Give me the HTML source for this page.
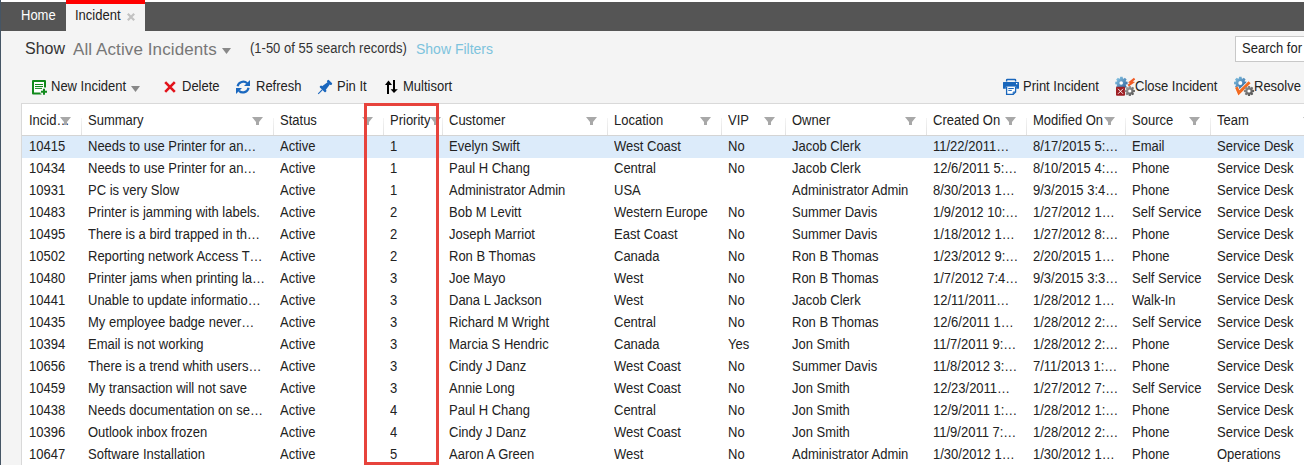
<!DOCTYPE html><html><head><meta charset="utf-8"><style>
*{margin:0;padding:0;box-sizing:border-box}
html,body{width:1304px;height:465px;overflow:hidden;background:#f4f4f4;font-family:"Liberation Sans",sans-serif;color:#222}
.a{position:absolute;white-space:nowrap}
#lstrip{position:absolute;left:0;top:0;width:1px;height:465px;background:#455565}
#topw{position:absolute;left:1px;top:0;width:1303px;height:2px;background:#fff}
#bar{position:absolute;left:1px;top:2px;width:1303px;height:29px;background:#555}
#tab{position:absolute;left:66px;top:0;width:79px;height:31px;background:#f4f4f4;border-top:4px solid #f00}
.s{font-size:14px;transform:scaleX(0.9286);transform-origin:0 0}
.t{line-height:22px;height:22px;overflow:hidden}
.h{line-height:16px}
#tbl{position:absolute;left:21px;top:103px;width:1300px;height:370px;background:#fff;border:1px solid #d9d9d9}
#hb{position:absolute;left:22px;top:135px;width:1290px;height:1px;background:#d4d4d4}
.sep{position:absolute;top:118px;width:1px;height:17px;background:linear-gradient(#f4f4f4,#e2e2e2)}
.rowhl{position:absolute;left:22px;top:136px;width:1290px;height:22px;background:#dcebfa}
#red{position:absolute;left:364px;top:103px;width:75px;height:362px;border:3px solid #e7433c}
</style></head><body>
<div id="lstrip"></div><div id="topw"></div><div id="bar"></div><div id="tab"></div>
<div class="a s" style="left:21px;top:7px;line-height:16px;color:#fff">Home</div>
<div class="a s" style="left:75px;top:7px;line-height:16px;color:#222">Incident</div>
<div class="a" style="left:25px;top:40px;font-size:16px;line-height:18px;color:#333">Show</div>
<div class="a" style="left:73px;top:41px;font-size:17px;line-height:18px;letter-spacing:0.1px;color:#777">All Active Incidents</div>
<svg class="a" style="left:222px;top:48px" width="9" height="6"><path d="M0 0H9L4.5 6Z" fill="#888"/></svg>
<div class="a s" style="left:250px;top:40px;line-height:16px;color:#333">(1-50 of 55 search records)</div>
<div class="a" style="left:416px;top:41px;font-size:14px;line-height:16px;color:#7dc3dd">Show Filters</div>
<div class="a" style="left:1235px;top:36px;width:80px;height:26px;background:#fff;border:1px solid #c8c8c8"></div>
<div class="a s" style="left:1242px;top:40px;line-height:16px;color:#222">Search for</div>
<div class="a s" style="left:51px;top:78px;line-height:16px;color:#222">New Incident</div>
<div class="a s" style="left:182px;top:78px;line-height:16px;color:#222">Delete</div>
<div class="a s" style="left:256px;top:78px;line-height:16px;color:#222">Refresh</div>
<div class="a s" style="left:337px;top:78px;line-height:16px;color:#222">Pin It</div>
<div class="a s" style="left:403px;top:78px;line-height:16px;color:#222">Multisort</div>
<div class="a s" style="left:1023px;top:78px;line-height:16px;color:#222">Print Incident</div>
<div class="a s" style="left:1135px;top:78px;line-height:16px;color:#222">Close Incident</div>
<div class="a s" style="left:1254px;top:78px;line-height:16px;color:#222">Resolve</div>
<svg class="a" style="left:131px;top:86px" width="9" height="6"><path d="M0 0H9L4.5 6Z" fill="#888"/></svg>
<div id="tbl"></div><div id="hb"></div>
<div class="sep" style="left:81px"></div>
<div class="sep" style="left:273px"></div>
<div class="sep" style="left:383px"></div>
<div class="sep" style="left:442px"></div>
<div class="sep" style="left:607px"></div>
<div class="sep" style="left:721px"></div>
<div class="sep" style="left:785px"></div>
<div class="sep" style="left:926px"></div>
<div class="sep" style="left:1026px"></div>
<div class="sep" style="left:1125px"></div>
<div class="sep" style="left:1210px"></div>
<div class="a h s" style="left:29px;top:112px">Incid…</div>
<div class="a h s" style="left:88px;top:112px">Summary</div>
<div class="a h s" style="left:280px;top:112px">Status</div>
<div class="a h s" style="left:390px;top:112px">Priority</div>
<div class="a h s" style="left:449px;top:112px">Customer</div>
<div class="a h s" style="left:614px;top:112px">Location</div>
<div class="a h s" style="left:728px;top:112px">VIP</div>
<div class="a h s" style="left:792px;top:112px">Owner</div>
<div class="a h s" style="left:933px;top:112px">Created On</div>
<div class="a h s" style="left:1033px;top:112px">Modified On</div>
<div class="a h s" style="left:1132px;top:112px">Source</div>
<div class="a h s" style="left:1217px;top:112px">Team</div>
<svg class="a" style="left:60px;top:117px" width="11" height="8"><path d="M0 0H11L7 5V8H4V5Z" fill="#a8a8a8"/></svg>
<svg class="a" style="left:252px;top:117px" width="11" height="8"><path d="M0 0H11L7 5V8H4V5Z" fill="#a8a8a8"/></svg>
<svg class="a" style="left:362px;top:117px" width="11" height="8"><path d="M0 0H11L7 5V8H4V5Z" fill="#a8a8a8"/></svg>
<svg class="a" style="left:430px;top:117px" width="11" height="8"><path d="M0 0H11L7 5V8H4V5Z" fill="#a8a8a8"/></svg>
<svg class="a" style="left:586px;top:117px" width="11" height="8"><path d="M0 0H11L7 5V8H4V5Z" fill="#a8a8a8"/></svg>
<svg class="a" style="left:700px;top:117px" width="11" height="8"><path d="M0 0H11L7 5V8H4V5Z" fill="#a8a8a8"/></svg>
<svg class="a" style="left:764px;top:117px" width="11" height="8"><path d="M0 0H11L7 5V8H4V5Z" fill="#a8a8a8"/></svg>
<svg class="a" style="left:905px;top:117px" width="11" height="8"><path d="M0 0H11L7 5V8H4V5Z" fill="#a8a8a8"/></svg>
<svg class="a" style="left:1005px;top:117px" width="11" height="8"><path d="M0 0H11L7 5V8H4V5Z" fill="#a8a8a8"/></svg>
<svg class="a" style="left:1104px;top:117px" width="11" height="8"><path d="M0 0H11L7 5V8H4V5Z" fill="#a8a8a8"/></svg>
<svg class="a" style="left:1189px;top:117px" width="11" height="8"><path d="M0 0H11L7 5V8H4V5Z" fill="#a8a8a8"/></svg>
<svg class="a" style="left:1303px;top:117px" width="11" height="8"><path d="M0 0H11L7 5V8H4V5Z" fill="#a8a8a8"/></svg>
<div class="rowhl"></div>
<div class="a t s" style="left:29px;top:135px;width:54px">10415</div>
<div class="a t s" style="left:88px;top:135px;width:198px">Needs to use Printer for an…</div>
<div class="a t s" style="left:280px;top:135px;width:109px">Active</div>
<div class="a t s" style="left:390px;top:135px;width:54px">1</div>
<div class="a t s" style="left:449px;top:135px;width:169px">Evelyn Swift</div>
<div class="a t s" style="left:614px;top:135px;width:114px">West Coast</div>
<div class="a t s" style="left:728px;top:135px;width:60px">No</div>
<div class="a t s" style="left:792px;top:135px;width:143px">Jacob Clerk</div>
<div class="a t s" style="left:933px;top:135px;width:99px">11/22/2011…</div>
<div class="a t s" style="left:1033px;top:135px;width:97px">8/17/2015 5:…</div>
<div class="a t s" style="left:1132px;top:135px;width:82px">Email</div>
<div class="a t s" style="left:1217px;top:135px;width:195px">Service Desk</div>
<div class="a t s" style="left:29px;top:157px;width:54px">10434</div>
<div class="a t s" style="left:88px;top:157px;width:198px">Needs to use Printer for an…</div>
<div class="a t s" style="left:280px;top:157px;width:109px">Active</div>
<div class="a t s" style="left:390px;top:157px;width:54px">1</div>
<div class="a t s" style="left:449px;top:157px;width:169px">Paul H Chang</div>
<div class="a t s" style="left:614px;top:157px;width:114px">Central</div>
<div class="a t s" style="left:728px;top:157px;width:60px">No</div>
<div class="a t s" style="left:792px;top:157px;width:143px">Jacob Clerk</div>
<div class="a t s" style="left:933px;top:157px;width:99px">12/6/2011 5:…</div>
<div class="a t s" style="left:1033px;top:157px;width:97px">8/10/2015 4:…</div>
<div class="a t s" style="left:1132px;top:157px;width:82px">Phone</div>
<div class="a t s" style="left:1217px;top:157px;width:195px">Service Desk</div>
<div class="a t s" style="left:29px;top:179px;width:54px">10931</div>
<div class="a t s" style="left:88px;top:179px;width:198px">PC is very Slow</div>
<div class="a t s" style="left:280px;top:179px;width:109px">Active</div>
<div class="a t s" style="left:390px;top:179px;width:54px">1</div>
<div class="a t s" style="left:449px;top:179px;width:169px">Administrator Admin</div>
<div class="a t s" style="left:614px;top:179px;width:114px">USA</div>
<div class="a t s" style="left:792px;top:179px;width:143px">Administrator Admin</div>
<div class="a t s" style="left:933px;top:179px;width:99px">8/30/2013 1…</div>
<div class="a t s" style="left:1033px;top:179px;width:97px">9/3/2015 3:4…</div>
<div class="a t s" style="left:1132px;top:179px;width:82px">Phone</div>
<div class="a t s" style="left:1217px;top:179px;width:195px">Service Desk</div>
<div class="a t s" style="left:29px;top:201px;width:54px">10483</div>
<div class="a t s" style="left:88px;top:201px;width:198px">Printer is jamming with labels.</div>
<div class="a t s" style="left:280px;top:201px;width:109px">Active</div>
<div class="a t s" style="left:390px;top:201px;width:54px">2</div>
<div class="a t s" style="left:449px;top:201px;width:169px">Bob M Levitt</div>
<div class="a t s" style="left:614px;top:201px;width:114px">Western Europe</div>
<div class="a t s" style="left:728px;top:201px;width:60px">No</div>
<div class="a t s" style="left:792px;top:201px;width:143px">Summer Davis</div>
<div class="a t s" style="left:933px;top:201px;width:99px">1/9/2012 10:…</div>
<div class="a t s" style="left:1033px;top:201px;width:97px">1/27/2012 1…</div>
<div class="a t s" style="left:1132px;top:201px;width:82px">Self Service</div>
<div class="a t s" style="left:1217px;top:201px;width:195px">Service Desk</div>
<div class="a t s" style="left:29px;top:223px;width:54px">10495</div>
<div class="a t s" style="left:88px;top:223px;width:198px">There is a bird trapped in th…</div>
<div class="a t s" style="left:280px;top:223px;width:109px">Active</div>
<div class="a t s" style="left:390px;top:223px;width:54px">2</div>
<div class="a t s" style="left:449px;top:223px;width:169px">Joseph Marriot</div>
<div class="a t s" style="left:614px;top:223px;width:114px">East Coast</div>
<div class="a t s" style="left:728px;top:223px;width:60px">No</div>
<div class="a t s" style="left:792px;top:223px;width:143px">Summer Davis</div>
<div class="a t s" style="left:933px;top:223px;width:99px">1/18/2012 1…</div>
<div class="a t s" style="left:1033px;top:223px;width:97px">1/27/2012 8:…</div>
<div class="a t s" style="left:1132px;top:223px;width:82px">Phone</div>
<div class="a t s" style="left:1217px;top:223px;width:195px">Service Desk</div>
<div class="a t s" style="left:29px;top:245px;width:54px">10502</div>
<div class="a t s" style="left:88px;top:245px;width:198px">Reporting network Access T…</div>
<div class="a t s" style="left:280px;top:245px;width:109px">Active</div>
<div class="a t s" style="left:390px;top:245px;width:54px">2</div>
<div class="a t s" style="left:449px;top:245px;width:169px">Ron B Thomas</div>
<div class="a t s" style="left:614px;top:245px;width:114px">Canada</div>
<div class="a t s" style="left:728px;top:245px;width:60px">No</div>
<div class="a t s" style="left:792px;top:245px;width:143px">Ron B Thomas</div>
<div class="a t s" style="left:933px;top:245px;width:99px">1/23/2012 9:…</div>
<div class="a t s" style="left:1033px;top:245px;width:97px">2/20/2015 1…</div>
<div class="a t s" style="left:1132px;top:245px;width:82px">Phone</div>
<div class="a t s" style="left:1217px;top:245px;width:195px">Service Desk</div>
<div class="a t s" style="left:29px;top:267px;width:54px">10480</div>
<div class="a t s" style="left:88px;top:267px;width:198px">Printer jams when printing la…</div>
<div class="a t s" style="left:280px;top:267px;width:109px">Active</div>
<div class="a t s" style="left:390px;top:267px;width:54px">3</div>
<div class="a t s" style="left:449px;top:267px;width:169px">Joe Mayo</div>
<div class="a t s" style="left:614px;top:267px;width:114px">West</div>
<div class="a t s" style="left:728px;top:267px;width:60px">No</div>
<div class="a t s" style="left:792px;top:267px;width:143px">Ron B Thomas</div>
<div class="a t s" style="left:933px;top:267px;width:99px">1/7/2012 7:4…</div>
<div class="a t s" style="left:1033px;top:267px;width:97px">9/3/2015 3:3…</div>
<div class="a t s" style="left:1132px;top:267px;width:82px">Self Service</div>
<div class="a t s" style="left:1217px;top:267px;width:195px">Service Desk</div>
<div class="a t s" style="left:29px;top:289px;width:54px">10441</div>
<div class="a t s" style="left:88px;top:289px;width:198px">Unable to update informatio…</div>
<div class="a t s" style="left:280px;top:289px;width:109px">Active</div>
<div class="a t s" style="left:390px;top:289px;width:54px">3</div>
<div class="a t s" style="left:449px;top:289px;width:169px">Dana L Jackson</div>
<div class="a t s" style="left:614px;top:289px;width:114px">West</div>
<div class="a t s" style="left:728px;top:289px;width:60px">No</div>
<div class="a t s" style="left:792px;top:289px;width:143px">Jacob Clerk</div>
<div class="a t s" style="left:933px;top:289px;width:99px">12/11/2011…</div>
<div class="a t s" style="left:1033px;top:289px;width:97px">1/28/2012 1…</div>
<div class="a t s" style="left:1132px;top:289px;width:82px">Walk-In</div>
<div class="a t s" style="left:1217px;top:289px;width:195px">Service Desk</div>
<div class="a t s" style="left:29px;top:311px;width:54px">10435</div>
<div class="a t s" style="left:88px;top:311px;width:198px">My employee badge never…</div>
<div class="a t s" style="left:280px;top:311px;width:109px">Active</div>
<div class="a t s" style="left:390px;top:311px;width:54px">3</div>
<div class="a t s" style="left:449px;top:311px;width:169px">Richard M Wright</div>
<div class="a t s" style="left:614px;top:311px;width:114px">Central</div>
<div class="a t s" style="left:728px;top:311px;width:60px">No</div>
<div class="a t s" style="left:792px;top:311px;width:143px">Ron B Thomas</div>
<div class="a t s" style="left:933px;top:311px;width:99px">12/6/2011 1…</div>
<div class="a t s" style="left:1033px;top:311px;width:97px">1/28/2012 2:…</div>
<div class="a t s" style="left:1132px;top:311px;width:82px">Self Service</div>
<div class="a t s" style="left:1217px;top:311px;width:195px">Service Desk</div>
<div class="a t s" style="left:29px;top:333px;width:54px">10394</div>
<div class="a t s" style="left:88px;top:333px;width:198px">Email is not working</div>
<div class="a t s" style="left:280px;top:333px;width:109px">Active</div>
<div class="a t s" style="left:390px;top:333px;width:54px">3</div>
<div class="a t s" style="left:449px;top:333px;width:169px">Marcia S Hendric</div>
<div class="a t s" style="left:614px;top:333px;width:114px">Canada</div>
<div class="a t s" style="left:728px;top:333px;width:60px">Yes</div>
<div class="a t s" style="left:792px;top:333px;width:143px">Jon Smith</div>
<div class="a t s" style="left:933px;top:333px;width:99px">11/7/2011 9:…</div>
<div class="a t s" style="left:1033px;top:333px;width:97px">1/28/2012 2:…</div>
<div class="a t s" style="left:1132px;top:333px;width:82px">Phone</div>
<div class="a t s" style="left:1217px;top:333px;width:195px">Service Desk</div>
<div class="a t s" style="left:29px;top:355px;width:54px">10656</div>
<div class="a t s" style="left:88px;top:355px;width:198px">There is a trend whith users…</div>
<div class="a t s" style="left:280px;top:355px;width:109px">Active</div>
<div class="a t s" style="left:390px;top:355px;width:54px">3</div>
<div class="a t s" style="left:449px;top:355px;width:169px">Cindy J Danz</div>
<div class="a t s" style="left:614px;top:355px;width:114px">West Coast</div>
<div class="a t s" style="left:728px;top:355px;width:60px">No</div>
<div class="a t s" style="left:792px;top:355px;width:143px">Summer Davis</div>
<div class="a t s" style="left:933px;top:355px;width:99px">11/8/2012 3:…</div>
<div class="a t s" style="left:1033px;top:355px;width:97px">7/11/2013 1:…</div>
<div class="a t s" style="left:1132px;top:355px;width:82px">Phone</div>
<div class="a t s" style="left:1217px;top:355px;width:195px">Service Desk</div>
<div class="a t s" style="left:29px;top:377px;width:54px">10459</div>
<div class="a t s" style="left:88px;top:377px;width:198px">My transaction will not save</div>
<div class="a t s" style="left:280px;top:377px;width:109px">Active</div>
<div class="a t s" style="left:390px;top:377px;width:54px">3</div>
<div class="a t s" style="left:449px;top:377px;width:169px">Annie Long</div>
<div class="a t s" style="left:614px;top:377px;width:114px">West Coast</div>
<div class="a t s" style="left:728px;top:377px;width:60px">No</div>
<div class="a t s" style="left:792px;top:377px;width:143px">Jon Smith</div>
<div class="a t s" style="left:933px;top:377px;width:99px">12/23/2011…</div>
<div class="a t s" style="left:1033px;top:377px;width:97px">1/27/2012 7:…</div>
<div class="a t s" style="left:1132px;top:377px;width:82px">Self Service</div>
<div class="a t s" style="left:1217px;top:377px;width:195px">Service Desk</div>
<div class="a t s" style="left:29px;top:399px;width:54px">10438</div>
<div class="a t s" style="left:88px;top:399px;width:198px">Needs documentation on se…</div>
<div class="a t s" style="left:280px;top:399px;width:109px">Active</div>
<div class="a t s" style="left:390px;top:399px;width:54px">4</div>
<div class="a t s" style="left:449px;top:399px;width:169px">Paul H Chang</div>
<div class="a t s" style="left:614px;top:399px;width:114px">Central</div>
<div class="a t s" style="left:728px;top:399px;width:60px">No</div>
<div class="a t s" style="left:792px;top:399px;width:143px">Jon Smith</div>
<div class="a t s" style="left:933px;top:399px;width:99px">12/9/2011 1:…</div>
<div class="a t s" style="left:1033px;top:399px;width:97px">1/28/2012 1:…</div>
<div class="a t s" style="left:1132px;top:399px;width:82px">Phone</div>
<div class="a t s" style="left:1217px;top:399px;width:195px">Service Desk</div>
<div class="a t s" style="left:29px;top:421px;width:54px">10396</div>
<div class="a t s" style="left:88px;top:421px;width:198px">Outlook inbox frozen</div>
<div class="a t s" style="left:280px;top:421px;width:109px">Active</div>
<div class="a t s" style="left:390px;top:421px;width:54px">4</div>
<div class="a t s" style="left:449px;top:421px;width:169px">Cindy J Danz</div>
<div class="a t s" style="left:614px;top:421px;width:114px">West Coast</div>
<div class="a t s" style="left:728px;top:421px;width:60px">No</div>
<div class="a t s" style="left:792px;top:421px;width:143px">Jon Smith</div>
<div class="a t s" style="left:933px;top:421px;width:99px">11/9/2011 7:…</div>
<div class="a t s" style="left:1033px;top:421px;width:97px">1/28/2012 2:…</div>
<div class="a t s" style="left:1132px;top:421px;width:82px">Phone</div>
<div class="a t s" style="left:1217px;top:421px;width:195px">Service Desk</div>
<div class="a t s" style="left:29px;top:443px;width:54px">10647</div>
<div class="a t s" style="left:88px;top:443px;width:198px">Software Installation</div>
<div class="a t s" style="left:280px;top:443px;width:109px">Active</div>
<div class="a t s" style="left:390px;top:443px;width:54px">5</div>
<div class="a t s" style="left:449px;top:443px;width:169px">Aaron A Green</div>
<div class="a t s" style="left:614px;top:443px;width:114px">West</div>
<div class="a t s" style="left:728px;top:443px;width:60px">No</div>
<div class="a t s" style="left:792px;top:443px;width:143px">Administrator Admin</div>
<div class="a t s" style="left:933px;top:443px;width:99px">1/30/2012 1…</div>
<div class="a t s" style="left:1033px;top:443px;width:97px">1/30/2012 1…</div>
<div class="a t s" style="left:1132px;top:443px;width:82px">Phone</div>
<div class="a t s" style="left:1217px;top:443px;width:195px">Operations</div>
<svg class="a" style="left:31px;top:79px" width="18" height="18" viewBox="0 0 18 18"><rect x="2" y="2" width="12" height="12.6" fill="#fff"/><path d="M14 8.5V2H2V14.6H10.5" fill="none" stroke="#118a1c" stroke-width="2" stroke-linejoin="round"/><path d="M4 5.5H12M4 7.5H12M4 9.4H11" stroke="#118a1c" stroke-width="1"/><path d="M13 9.3V16.3M9.5 12.8H16.5" stroke="#f4f4f4" stroke-width="4"/><path d="M13 9.8V15.8M10 12.8H16" stroke="#118a1c" stroke-width="2"/></svg>
<svg class="a" style="left:162px;top:79px" width="16" height="16" viewBox="0 0 16 16"><path d="M3.2 3.2L12.8 12.8M12.8 3.2L3.2 12.8" stroke="#e2131b" stroke-width="2.6" stroke-linecap="butt"/></svg>
<svg class="a" style="left:236px;top:80px" width="15" height="15" viewBox="0 0 15 15"><path d="M1.6 6.2A5.8 5.8 0 0 1 11.2 3.3" fill="none" stroke="#1a68bf" stroke-width="2.2"/><path d="M14 0V6H8Z" fill="#1a68bf"/><path d="M12.6 7.8A5.8 5.8 0 0 1 3 10.9" fill="none" stroke="#1a68bf" stroke-width="2.2"/><path d="M0 8H6L0 14Z" fill="#1a68bf"/></svg>
<svg class="a" style="left:316px;top:79px" width="17" height="17" viewBox="-8.5 -8.5 17 17"><g transform="rotate(45)" fill="#1a66bd"><rect x="-3" y="-8.4" width="6" height="2.5" rx="1"/><path d="M-1.5 -6.2H1.5L2.7 1.2H-2.7Z"/><rect x="-4" y="0.8" width="8" height="2.4" rx="0.8"/><rect x="-0.55" y="3" width="1.1" height="5.9"/></g></svg>
<svg class="a" style="left:381px;top:77px" width="20" height="20" viewBox="0 0 20 20"><path d="M7 7.2V17" stroke="#000" stroke-width="2"/><path d="M4 8L7.5 3.6L11 8Z" fill="#000"/><path d="M13 3V13" stroke="#000" stroke-width="2"/><path d="M9.6 12.3L13 16L16.8 12.3Z" fill="#000"/></svg>
<svg class="a" style="left:1000px;top:76px" width="22" height="22" viewBox="0 0 22 22"><path d="M6.6 5.4V4.2Q6.6 3.5 7.3 3.5H14.9Q15.6 3.5 15.6 4.2V5.4" fill="none" stroke="#1966bb" stroke-width="1.4"/><path d="M3.5 6H18.5Q19 6 19 6.5V12.2Q19 12.8 18.4 12.8H16.2V10.8H5.8V12.8H3.6Q3 12.8 3 12.2V6.5Q3 6 3.5 6Z" fill="#1966bb"/><rect x="16" y="7" width="1.3" height="1.3" fill="#fff"/><path d="M6.6 10.8V18.4H13.2L15.6 16V10.8" fill="#fff" stroke="#1966bb" stroke-width="1.3"/><path d="M8.3 12.5H13.8M8.3 14.4H11.8" stroke="#1966bb" stroke-width="1"/><path d="M13.2 18.4V16H15.6" fill="none" stroke="#1966bb" stroke-width="1"/></svg>
<svg class="a" style="left:1113px;top:75px" width="24" height="24" viewBox="0 0 24 24"><defs><linearGradient id="gb" x1="0" y1="0" x2="1" y2="1"><stop offset="0" stop-color="#8fd0ec"/><stop offset="1" stop-color="#2a5a96"/></linearGradient><linearGradient id="gg" x1="0" y1="0" x2="1" y2="1"><stop offset="0" stop-color="#b0b0b0"/><stop offset="1" stop-color="#4a4a4a"/></linearGradient></defs><path d="M12.85 6.48 L14.58 6.77 L14.58 9.23 L12.85 9.52 L12.62 10.07 L13.64 11.50 L11.90 13.24 L10.47 12.22 L9.92 12.45 L9.63 14.18 L7.17 14.18 L6.88 12.45 L6.33 12.22 L4.90 13.24 L3.16 11.50 L4.18 10.07 L3.95 9.52 L2.22 9.23 L2.22 6.77 L3.95 6.48 L4.18 5.93 L3.16 4.50 L4.90 2.76 L6.33 3.78 L6.88 3.55 L7.17 1.82 L9.63 1.82 L9.92 3.55 L10.47 3.78 L11.90 2.76 L13.64 4.50 L12.62 5.93Z" fill="url(#gb)"/><circle cx="8.2" cy="8" r="1.8" fill="#fff"/><path d="M21.6 3.6L17.4 6.9L19.6 7.4L15.2 10.6" fill="none" stroke="#f15a24" stroke-width="2.1" stroke-linejoin="miter"/><rect x="3" y="11.8" width="9" height="9" rx="1" fill="#9e1f24"/><path d="M5 13.8L10 18.8M10 13.8L5 18.8" stroke="#fff" stroke-width="0.9"/><path d="M20.40 14.77 L21.90 14.99 L21.90 17.01 L20.40 17.23 L20.21 17.67 L21.12 18.89 L19.69 20.32 L18.47 19.41 L18.03 19.60 L17.81 21.10 L15.79 21.10 L15.57 19.60 L15.13 19.41 L13.91 20.32 L12.48 18.89 L13.39 17.67 L13.20 17.23 L11.70 17.01 L11.70 14.99 L13.20 14.77 L13.39 14.33 L12.48 13.11 L13.91 11.68 L15.13 12.59 L15.57 12.40 L15.79 10.90 L17.81 10.90 L18.03 12.40 L18.47 12.59 L19.69 11.68 L21.12 13.11 L20.21 14.33Z" fill="url(#gg)"/><circle cx="16.8" cy="16" r="1.6" fill="#fff"/></svg>
<svg class="a" style="left:1231px;top:75px" width="24" height="24" viewBox="0 0 24 24"><defs><linearGradient id="gb2" x1="0" y1="0" x2="1" y2="1"><stop offset="0" stop-color="#86c8e6"/><stop offset="1" stop-color="#2a5a96"/></linearGradient><linearGradient id="gg2" x1="0" y1="0" x2="1" y2="1"><stop offset="0" stop-color="#a0a0a0"/><stop offset="1" stop-color="#444"/></linearGradient></defs><path d="M13.75 6.48 L15.58 6.75 L15.58 9.25 L13.75 9.52 L13.52 10.07 L14.62 11.56 L12.86 13.32 L11.37 12.22 L10.82 12.45 L10.55 14.28 L8.05 14.28 L7.78 12.45 L7.23 12.22 L5.74 13.32 L3.98 11.56 L5.08 10.07 L4.85 9.52 L3.02 9.25 L3.02 6.75 L4.85 6.48 L5.08 5.93 L3.98 4.44 L5.74 2.68 L7.23 3.78 L7.78 3.55 L8.05 1.72 L10.55 1.72 L10.82 3.55 L11.37 3.78 L12.86 2.68 L14.62 4.44 L13.52 5.93Z" fill="url(#gb2)"/><circle cx="9.3" cy="8" r="2" fill="#fff"/><path d="M5.4 12.2L7.9 17.8L18.6 7.2" fill="none" stroke="#fff" stroke-width="4.2"/><path d="M5.4 12.2L7.9 17.8L18.6 7.2" fill="none" stroke="#f26b21" stroke-width="3"/><path d="M21.60 14.77 L23.10 14.99 L23.10 17.01 L21.60 17.23 L21.41 17.67 L22.32 18.89 L20.89 20.32 L19.67 19.41 L19.23 19.60 L19.01 21.10 L16.99 21.10 L16.77 19.60 L16.33 19.41 L15.11 20.32 L13.68 18.89 L14.59 17.67 L14.40 17.23 L12.90 17.01 L12.90 14.99 L14.40 14.77 L14.59 14.33 L13.68 13.11 L15.11 11.68 L16.33 12.59 L16.77 12.40 L16.99 10.90 L19.01 10.90 L19.23 12.40 L19.67 12.59 L20.89 11.68 L22.32 13.11 L21.41 14.33Z" fill="url(#gg2)"/><circle cx="18" cy="16" r="1.6" fill="#fff"/></svg>
<svg class="a" style="left:126px;top:12px" width="10" height="10" viewBox="0 0 10 10"><path d="M1.8 1.8L8.2 8.2M8.2 1.8L1.8 8.2" stroke="#c2c2c2" stroke-width="2.2"/></svg>
<div id="red"></div>
</body></html>
